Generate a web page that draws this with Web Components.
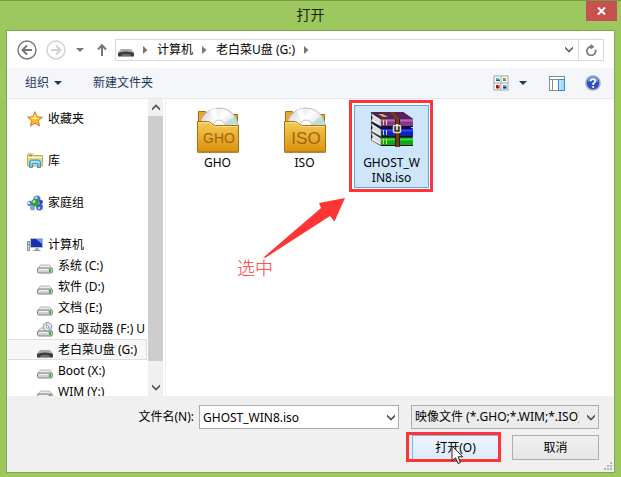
<!DOCTYPE html>
<html lang="zh-CN">
<head>
<meta charset="utf-8">
<title>打开</title>
<style>
  html, body {
    height: 100%;
    margin: 0;
  }
  body {
    font: 12px/16px "Noto Sans", "Noto Sans CJK SC", sans-serif;
    color: #000;
    overflow: hidden;
  }
</style>
</head>
<body>
<open-dialog></open-dialog>

<script>
// every icon: [width, height, svg content]
const drive = `
  <path d="M3.500 6h9l3 4v1H.5v-1z" fill="#ececee" stroke="#a6a6aa" stroke-width=".8"/>
  <rect x=".5" y="9" width="15" height="5" rx="1.500" fill="#cfd0d4" stroke="#808186" stroke-width="1"/>
  <path d="M2 10.500h9" stroke="#f4f4f6"/>
  <rect x="12" y="10" width="2" height="3" fill="#35b52e"/>`;

const folder = (id) => `
  <defs>
    <linearGradient id="f${id}" x1="0" y1="0" x2="0" y2="1">
      <stop offset="0" stop-color="#f5cb56"/><stop offset="1" stop-color="#d9920f"/>
    </linearGradient>
    <linearGradient id="c${id}" x1="0" y1="0" x2="1" y2="1">
      <stop offset="0" stop-color="#cfcfd4"/><stop offset=".4" stop-color="#fff"/>
      <stop offset=".6" stop-color="#e2e2e6"/><stop offset="1" stop-color="#a5e5d2"/>
    </linearGradient>
  </defs>
  <path d="M1.500 18V4.500h7l2 3h30V18z" fill="#e8a82f" stroke="#a86c08"/>
  <circle cx="22" cy="20" r="19" fill="url(#c${id})" stroke="#b9b9be"/>
  <path d="M22 20 12 4a19 19 0 0 1 7-3z" fill="#fff" opacity=".8"/>
  <path d="M22 20 38 9a19 19 0 0 1 3 7z" fill="#9fdccb" opacity=".6"/>
  <circle cx="22" cy="19" r="6" fill="#fff" stroke="#c5c5c9"/>
  <path d="M.5 14.500h10q2 0 4 2t4 2h23V44q0 1-1 1H1.500q-1 0-1-1z" fill="url(#f${id})" stroke="#aa6d08"/>
  <path d="M1.500 15.500h9q2 0 4 2t4 2h22" fill="none" stroke="#fbe293"/>
  <path d="M0 45.500h42" stroke="#8a5a0c" opacity=".5"/>`;

// one volume of the archive stack: cover, spine, page edges
const book = (y, spine, shine, cover) => `
  <path d="M1 ${y}h32l10 7v8H11L1 ${y + 9}z" fill="#111"/>
  <path d="M1 ${y}h32l10 7H11z" fill="${cover}"/>
  <path d="M11 ${y + 7}h32v7H11z" fill="${spine}"/>
  <path d="M11 ${y + 8.500}h32" stroke="${shine}" stroke-width="2"/>
  <path d="M1 ${y + 1}l10 6.500v7l-10-5.500 1.500-3z" fill="#f4f4f4" stroke="#666" stroke-width=".6"/>
  <path d="M2.500 ${y + 4.500}l8 5M2.500 ${y + 6.500}l8 5" stroke="#b5b5b5" stroke-width=".7"/>
  <path d="M13.500 ${y + 8}v5M16.500 ${y + 8}v5" stroke="#f3dc3a"/>`;

const icons = {
  back: [20, 20, `<circle cx="10" cy="10" r="9" fill="none" stroke="#767676" stroke-width="1.400"/>
    <path d="M15 10H6M10 5.500 5.500 10l4.500 4.500" fill="none" stroke="#767676" stroke-width="2"/>`],
  forward: [20, 20, `<circle cx="10" cy="10" r="9" fill="none" stroke="#d0d0d0" stroke-width="1.400"/>
    <path d="M5 10h9M10 5.500l4.500 4.500-4.500 4.500" fill="none" stroke="#d0d0d0" stroke-width="2"/>`],
  up: [10, 14, `<path d="M5 13V3M1 6.500 5 2.200l4 4.300" fill="none" stroke="#777" stroke-width="2"/>`],
  caret: [8, 4, `<path d="M0 0h8L4 4z" fill="currentColor"/>`],
  crumb: [5, 8, `<path d="M0 0v8l4.500-4z" fill="#777"/>`],
  chevron: [8, 7, `<path d="M0 .5 4 4.300 8 .5v2.300L4 6.800 0 2.800z" fill="currentColor"/>`],
  chevronUp: [8, 7, `<path d="M0 6.500 4 2.700l4 3.800V4.200L4 .2 0 4.200z" fill="currentColor"/>`],
  refresh: [12, 12, `<path d="M10.400 5.500A4.400 4.400 0 1 1 6 2.600h1.500" fill="none" stroke="#777" stroke-width="1.700"/>
    <path d="M5.500 0 9.500 2.700 5.500 5.600z" fill="#777"/>`],
  close: [9, 8, `<path d="M1 .5 8 7.500M8 .5 1 7.500" stroke="#fff" stroke-width="2"/>`],
  views: [16, 16, `<rect x=".5" y=".5" width="15" height="15" fill="#9aa2b1"/>
    <path d="M1.500 1.500h6v6h-6zM8.500 1.500h6v6h-6zM1.500 8.500h6v6h-6zM8.500 8.500h6v6h-6z" fill="#fff"/>
    <path d="M3 3h3v1.500H3z" fill="#5ca7df"/><path d="M3 4.500h4V6H3z" fill="#1c6b46"/>
    <path d="M10 3h3v3h-3z" fill="#48a935"/><path d="M11.500 3H13v2h-1.500z" fill="#f28b22"/>
    <path d="M3 10h3.500v3.500H3z" fill="#a2160e"/><path d="M5 10h1.500v1.500H5z" fill="#f07c1a"/>
    <path d="M10 10h3.500v3.500H10z" fill="#5c93c8"/><path d="M10 12h3.500v1.500H10z" fill="#263a58"/>`],
  pane: [16, 15, `<rect x=".5" y=".5" width="15" height="14" fill="#fff" stroke="#858a91"/>
    <path d="M0 3.500h16M3.500 3.500v11" stroke="#858a91"/>
    <rect x="9.500" y="3.500" width="6" height="11" fill="#a9d8fb" stroke="#2f8fdd"/>
    <path d="M11 5v8" stroke="#e3f4ff"/>`],
  help: [16, 16, `<circle cx="8" cy="8" r="7" fill="#2c4fc4" stroke="#a2a8b8" stroke-width="1.500"/>
    <path d="M2.500 7a5.500 5.500 0 0 1 11 0Q8 4.500 2.500 7z" fill="#6c90ea"/>
    <path d="M5.600 6.300Q5.800 4 8 4t2.400 2Q10.400 7.300 8.200 8.600V10" fill="none" stroke="#fff" stroke-width="1.700"/>
    <circle cx="8.200" cy="12" r="1.100" fill="#fff"/>`],
  star: [16, 16, `<path d="M8 .7l2.100 5 5.300.5-4 3.600 1.200 5.200L8 12.300 3.400 15l1.200-5.200-4-3.600 5.300-.5z" fill="#fdb833" stroke="#dc7c22"/>
    <path d="M8 3l1.300 3.700 3.200.4L8 8.500 3.300 7l3.300-.4z" fill="#fff0a0"/>`],
  library: [16, 16, `<path d="M.5 13V2q0-1 1-1h4l1 1.500H15q.5 0 .5.500v10z" fill="#eed987" stroke="#c5a95b"/>
    <path d="M2 2.500h3" stroke="#35b52e"/><path d="M1 4.500h14" stroke="#fff5c9"/>
    <path d="M2.500 14.500V9q0-2 2-2h7q2 0 2 2v5.500h-3V11q0-.5-.5-.5H6q-.5 0-.5.5v3.500z" fill="#77c9ee" stroke="#3a92c7"/>
    <path d="M4 9h8" stroke="#d3f1ff"/>`],
  homegroup: [16, 16, `<circle cx="10" cy="4" r="3.500" fill="#4f74d8"/><circle cx="3" cy="8.500" r="2.800" fill="#5b82dc"/>
    <circle cx="12.500" cy="12" r="3.400" fill="#3c5fc6"/><circle cx="5.500" cy="13" r="2.500" fill="#7fa0e6"/>
    <circle cx="14" cy="7" r="1.900" fill="#2440a4"/><circle cx="1.800" cy="8" r="1.300" fill="#dbe5fb"/>
    <circle cx="8" cy="7.800" r="3.700" fill="#2f9e3c"/><circle cx="7" cy="6.500" r="1.500" fill="#a9e59b"/>
    <circle cx="9.200" cy="2.800" r="1.300" fill="#d0dcfa"/><circle cx="12" cy="13" r="1.200" fill="#c0d0fa"/>`],
  computer: [16, 16, `<rect x=".5" y="4.500" width="2" height="9" fill="#d5d8dc" stroke="#8f959c"/>
    <path d="M0 7.500h2" stroke="#35b52e"/>
    <rect x="3.500" y="1.500" width="12" height="9" fill="#1631ac" stroke="#b9bfc8"/>
    <path d="M9 2h6v5z" fill="#6e97ec"/><path d="M8.500 11h3l.5 2.500H8z" fill="#a3a8b0"/>
    <path d="M6.500 13.500h7" stroke="#8d939c"/>`],
  drive: [16, 16, drive],
  cd: [16, 16, `${drive}<circle cx="10.500" cy="4.800" r="4.300" fill="#e4e7ec" stroke="#8b8f97"/>
    <path d="M10.500 4.800 7.500 1.800 10.500.8z" fill="#9fd6a4"/><path d="M10.500 4.800l3.500 1-2 2.500z" fill="#b4bce4"/>
    <circle cx="10.500" cy="4.800" r="1.300" fill="#fff" stroke="#8b8f97" stroke-width=".8"/>`],
  usb: [16, 16, `<path d="M3.500 7h9q1 0 3.500 3.500v3q0 1-1 1H1q-1 0-1-1v-3Q2.500 7 3.500 7z" fill="#aaabad"/>
    <path d="M0 11q3-1.500 8-1.500t8 1.500v2.500q0 1-1 1h-2l-1.500-2h-7l-1.500 2H1q-1 0-1-1z" fill="#3b3c3f"/>
    <path d="M4.500 12.500h7l1 2h-9z" fill="#696b6f"/>`],
  gho: [42, 46, folder('g') + `<text x="22" y="36" text-anchor="middle" font-family="Liberation Sans, sans-serif" font-size="14" fill="#a0660b">GHO</text>`],
  iso: [42, 46, folder('i') + `<text x="22" y="37" text-anchor="middle" font-family="Liberation Sans, sans-serif" font-size="17" fill="#a0660b">ISO</text>`],
  rar: [44, 36, `${book(19, '#11a51d', '#35d83f', '#06500b')}${book(10, '#1022b8', '#2f48ee', '#080d5c')}${book(0, '#84398a', '#b368b8', '#562058')}
    <path d="M8 2h5l5 3h-5z" fill="#c8b62e"/>
    <path d="M20 0h4l6 7v28h-5V7z" fill="#713c15"/><path d="M25.500 7v27M29.500 7v27" stroke="#351b09"/>
    <rect x="23.500" y="13.500" width="7" height="7" rx="1" fill="#3f3a24" stroke="#e4ddbb" stroke-width="1.500"/>
    <path d="M27 12v6" stroke="#fff" stroke-width="1.500"/>`],
  grip: [9, 9, `<path d="M6 0h2v2H6zM3 3h2v2H3zM6 3h2v2H6zM0 6h2v2H0zM3 6h2v2H3zM6 6h2v2H6z" fill="#b5b5b5"/>`],
  cursor: [13, 20, `<path d="M1 1v15l3.500-3.300L7 18.500l2.500-1-2.500-5.700h4.700z" fill="#fff" stroke="#222"/>`],
  arrow: [82, 61, `<path d="M81 0 70.500 23.500 66 18 1 60l-1-1L57 10 55 5z" fill="#ff3535"/>`],
};

class UiIcon extends HTMLElement {
  constructor() {
    super();
    this.attachShadow({ mode: 'open' });
  }

  connectedCallback() {
    const [w, h, body] = icons[this.getAttribute('name')];
    this.shadowRoot.innerHTML = `
      <style>
        :host { display: inline-block; flex: none; }
        svg { display: block; }
      </style>
      <svg width="${w}" height="${h}" viewBox="0 0 ${w} ${h}" aria-hidden="true">${body}</svg>`;
  }
}
customElements.define('ui-icon', UiIcon);

// small helper for the elements that only need a static template
function define(name, html) {
  const template = document.createElement('template');
  template.innerHTML = html;
  customElements.define(name, class extends HTMLElement {
    constructor() {
      super();
      this.attachShadow({ mode: 'open' }).appendChild(template.content.cloneNode(true));
    }
  });
}

const reset = `
  * { box-sizing: border-box; }
  button { font: inherit; color: inherit; background: none; border: 0; padding: 0; margin: 0;
    display: flex; align-items: center; justify-content: center; }
`;

define('title-bar', `
  <style>
    ${reset}
    :host { display: grid; grid-template-columns: 1fr auto 1fr; height: 29px; padding: 0 4px; }
    h1 { margin: 0; font-size: 14px; font-weight: normal; line-height: 28px; color: #1c2410; grid-column: 2; }
    button { justify-self: end; width: 31px; height: 20px; background: #c75050; }
  </style>
  <h1><slot></slot></h1>
  <button aria-label="关闭"><ui-icon name="close"></ui-icon></button>
`);

define('address-bar', `
  <style>
    ${reset}
    :host { display: flex; align-items: center; height: 37px; padding: 0 10px; background: #fff; color: #777; }
    .forward { margin-left: 9px; }
    .recent { margin-left: 10px; }
    .up { margin: 0 8px 0 13px; }
    .box { flex: 1; display: flex; height: 22px; border: 1px solid #d9d9d9; color: #000; }
    nav { flex: 1; display: flex; align-items: center; padding-left: 2px; gap: 9px; }
    .drop { width: 18px; color: #666; }
    .refresh { width: 25px; border-left: 1px solid #d9d9d9; }
  </style>
  <button aria-label="后退"><ui-icon name="back"></ui-icon></button>
  <button class="forward" aria-label="前进"><ui-icon name="forward"></ui-icon></button>
  <button class="recent" aria-label="最近"><ui-icon name="caret"></ui-icon></button>
  <button class="up" aria-label="上移"><ui-icon name="up"></ui-icon></button>
  <div class="box">
    <nav>
      <ui-icon name="usb"></ui-icon>
      <ui-icon name="crumb"></ui-icon>
      <button>计算机</button>
      <ui-icon name="crumb"></ui-icon>
      <button>老白菜U盘 (G:)</button>
      <ui-icon name="crumb"></ui-icon>
    </nav>
    <button class="drop" aria-label="历史"><ui-icon name="chevron"></ui-icon></button>
    <button class="refresh" aria-label="刷新"><ui-icon name="refresh"></ui-icon></button>
  </div>
`);

define('tool-bar', `
  <style>
    ${reset}
    :host { display: flex; align-items: center; height: 31px; box-sizing: border-box; padding: 0 13px 0 18px;
      background: #f4f6f9; border-bottom: 1px solid #e5e8ee; color: #1e395b; }
    .menu { gap: 5px; margin-right: 31px; }
    .views { margin-left: auto; gap: 10px; }
    .pane { margin: 0 20px 0 22px; }
  </style>
  <button class="menu">组织<ui-icon name="caret"></ui-icon></button>
  <button>新建文件夹</button>
  <button class="views" aria-label="视图"><ui-icon name="views"></ui-icon><ui-icon name="caret"></ui-icon></button>
  <button class="pane" aria-label="预览窗格"><ui-icon name="pane"></ui-icon></button>
  <button aria-label="帮助"><ui-icon name="help"></ui-icon></button>
`);

class NavItem extends HTMLElement {
  constructor() {
    super();
    this.attachShadow({ mode: 'open' });
  }

  connectedCallback() {
    this.shadowRoot.innerHTML = `
      <style>
        :host { display: block; padding: 0 1px; }
        a { display: flex; align-items: center; gap: 5px; height: 21px; padding-left: 19px; box-sizing: border-box;
          border: 1px solid transparent; border-width: 1px 0; color: #000; text-decoration: none; white-space: nowrap; overflow: hidden; }
        :host([child]) a { padding-left: 29px; }
        :host([child]) ui-icon { align-self: flex-end; }
        :host([current]) a { background: #f7f7f7; border-color: #dedede; border-right-width: 1px; }
      </style>
      <a href="#"><ui-icon name="${this.getAttribute('icon')}"></ui-icon><slot></slot></a>`;
  }
}
customElements.define('nav-item', NavItem);

define('side-nav', `
  <style>
    ${reset}
    :host { display: flex; width: 158px; background: #fff; border-right: 1px solid #f0f0f0; min-height: 0; }
    nav { flex: 1; min-width: 0; padding-top: 9px; overflow: hidden; }
    .scroll { width: 15px; margin-right: 2px; display: flex; flex-direction: column; background: #f0f0f0; color: #555; }
    .scroll button { height: 17px; }
    .thumb { flex: 1; margin-bottom: 18px; background: #cdcdcd; }
  </style>
  <nav><slot></slot></nav>
  <div class="scroll">
    <button aria-label="向上滚动"><ui-icon name="chevronUp"></ui-icon></button>
    <div class="thumb"></div>
    <button aria-label="向下滚动"><ui-icon name="chevron"></ui-icon></button>
  </div>
`);

class FileTile extends HTMLElement {
  constructor() {
    super();
    this.attachShadow({ mode: 'open' });
  }

  connectedCallback() {
    this.shadowRoot.innerHTML = `
      <style>
        ${reset}
        :host { display: block; position: relative; width: 75px; }
        button { width: 100%; height: 83px; flex-direction: column; justify-content: flex-start; border: 1px solid transparent; }
        .picture { height: 48px; display: flex; align-items: center; }
        .name { width: 60px; line-height: 15px; padding-top: 1px; word-break: break-all; text-align: center; }
        :host([selected]) button { background: #cde6fb; border-color: #5fa8e8; }
        :host([marked])::after { content: ""; position: absolute; inset: -5px -4px -4px -5px; border: 3px solid #ff3535; }
      </style>
      <button>
        <span class="picture"><ui-icon name="${this.getAttribute('icon')}"></ui-icon></span>
        <span class="name"><slot></slot></span>
      </button>`;
  }
}
customElements.define('file-tile', FileTile);

define('file-pane', `
  <style>
    :host { display: block; position: relative; flex: 1; background: #fff; min-width: 0; }
    .grid { display: flex; flex-wrap: wrap; gap: 12px; padding: 6px 14px; }
    /* callout over the empty part of the pane */
    .arrow { position: absolute; left: 98px; top: 99px; }
    .note { position: absolute; left: 71px; top: 156px; font-size: 18px; line-height: 24px; font-weight: 300;
      font-family: "Noto Sans CJK SC", sans-serif; color: #ff3535; }
  </style>
  <div class="grid"><slot></slot></div>
  <ui-icon class="arrow" name="arrow"></ui-icon>
  <div class="note">选中</div>
`);

define('dialog-footer', `
  <style>
    ${reset}
    :host { display: grid; grid-template-columns: 1fr 200px 188px; column-gap: 12px; row-gap: 6px;
      position: relative; height: 76px; box-sizing: border-box; padding: 9px 15px 0 0; background: #f0f0f0; align-content: start; }
    label { text-align: right; line-height: 24px; margin-right: -7px; }
    .combo { display: grid; height: 24px; align-items: center; }
    .combo > * { grid-area: 1 / 1; }
    .combo ui-icon { justify-self: end; margin-right: 4px; color: #555; pointer-events: none; }
    input, select { width: 100%; height: 24px; font: inherit; color: #000; margin: 0; border: 1px solid #acacac;
      border-radius: 0; appearance: none; outline: 0; }
    input { background: #fff; padding: 0 20px 0 3px; }
    select { background: #ececec; padding: 0 19px 0 3px; }
    .actions { grid-column: 3; display: grid; grid-template-columns: 87px 87px; justify-content: end; gap: 13px; }
    .actions button { width: 100%; height: 25px; border: 1px solid #acacac; background: linear-gradient(#f0f0f0, #e6e6e6); }
    .primary { position: relative; }
    .primary::after { content: ""; position: absolute; inset: -3px -2px -2px -6px; border: 3px solid #ff3535; }
    .primary button { background: linear-gradient(#ebf4fc, #dcecfc); border-color: #7eb4ea; }
    .cursor { position: absolute; z-index: 1; left: 39px; top: 10px; }
    .grip { position: absolute; right: 1px; bottom: 1px; }
  </style>
  <label for="name">文件名(N):</label>
  <div class="combo"><input id="name" value="GHOST_WIN8.iso"><ui-icon name="chevron"></ui-icon></div>
  <div class="combo">
    <select aria-label="文件类型"><option>映像文件 (*.GHO;*.WIM;*.ISO)</option></select>
    <ui-icon name="chevron"></ui-icon>
  </div>
  <div class="actions">
    <div class="primary"><button>打开(O)</button><ui-icon class="cursor" name="cursor"></ui-icon></div>
    <button>取消</button>
  </div>
  <ui-icon class="grip" name="grip"></ui-icon>
`);

define('open-dialog', `
  <style>
    :host { display: flex; flex-direction: column; height: 100vh; box-sizing: border-box; padding-bottom: 4px;
      background: #9dc75f; border-top: 1px solid #789a48; }
    .window { flex: 1; display: flex; flex-direction: column; margin: 0 6px; min-height: 0; border: 1px solid #83a64d; }
    .main { flex: 1; display: flex; min-height: 0; }
    .gap { height: 21px; }
  </style>
  <title-bar>打开</title-bar>
  <div class="window">
    <address-bar></address-bar>
    <tool-bar></tool-bar>
    <div class="main">
      <side-nav>
        <nav-item icon="star">收藏夹</nav-item>
        <div class="gap"></div>
        <nav-item icon="library">库</nav-item>
        <div class="gap"></div>
        <nav-item icon="homegroup">家庭组</nav-item>
        <div class="gap"></div>
        <nav-item icon="computer">计算机</nav-item>
        <nav-item child icon="drive">系统 (C:)</nav-item>
        <nav-item child icon="drive">软件 (D:)</nav-item>
        <nav-item child icon="drive">文档 (E:)</nav-item>
        <nav-item child icon="cd">CD 驱动器 (F:) U</nav-item>
        <nav-item child current icon="usb">老白菜U盘 (G:)</nav-item>
        <nav-item child icon="drive">Boot (X:)</nav-item>
        <nav-item child icon="drive">WIM (Y:)</nav-item>
      </side-nav>
      <file-pane>
        <file-tile icon="gho">GHO</file-tile>
        <file-tile icon="iso">ISO</file-tile>
        <file-tile icon="rar" selected marked>GHOST_WIN8.iso</file-tile>
      </file-pane>
    </div>
    <dialog-footer></dialog-footer>
  </div>
`);
</script>
</body>
</html>
